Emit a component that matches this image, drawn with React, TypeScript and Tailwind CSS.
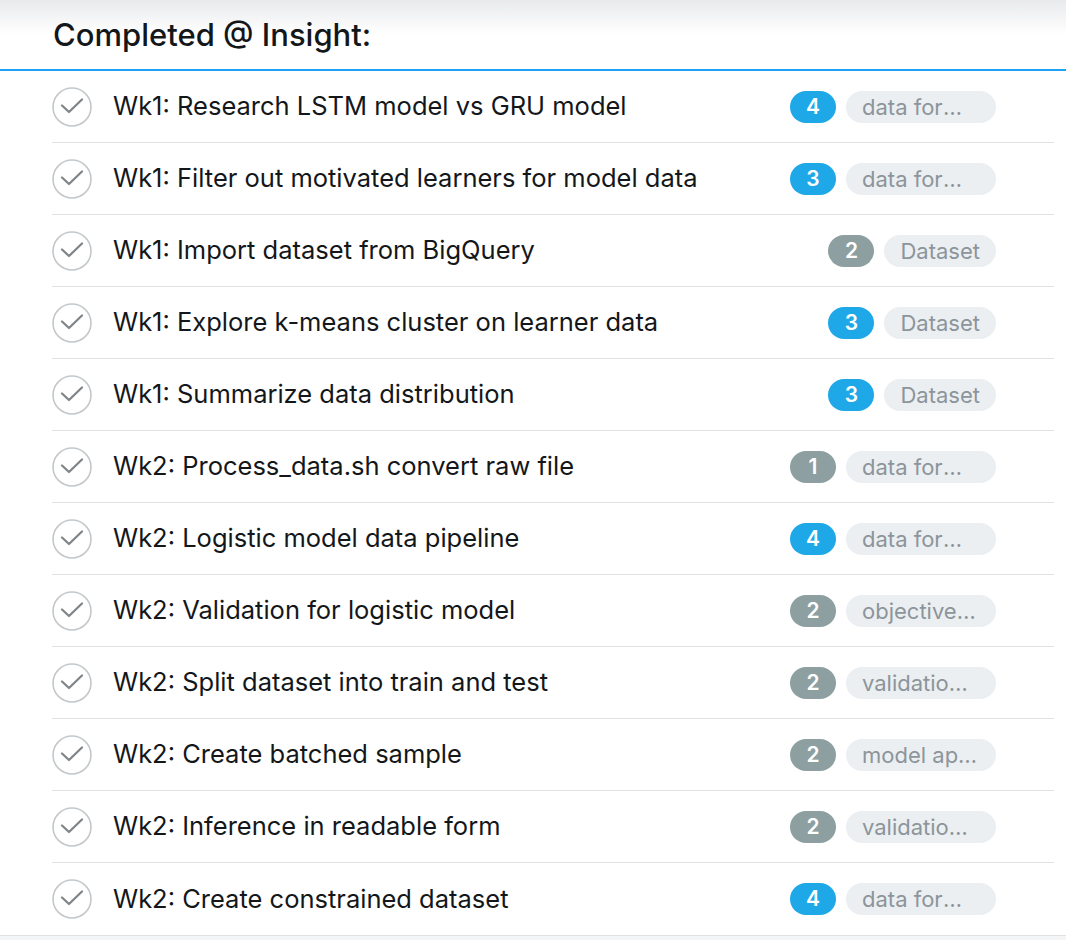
import React from 'react';

type Task = { title: string; count: number; tag: string; hot: boolean };

const tasks: Task[] = [
  { title: 'Wk1: Research LSTM model vs GRU model', count: 4, tag: 'data formatting', hot: true },
  { title: 'Wk1: Filter out motivated learners for model data', count: 3, tag: 'data formatting', hot: true },
  { title: 'Wk1: Import dataset from BigQuery', count: 2, tag: 'Dataset', hot: false },
  { title: 'Wk1: Explore k-means cluster on learner data', count: 3, tag: 'Dataset', hot: true },
  { title: 'Wk1: Summarize data distribution', count: 3, tag: 'Dataset', hot: true },
  { title: 'Wk2: Process_data.sh convert raw file', count: 1, tag: 'data formatting', hot: false },
  { title: 'Wk2: Logistic model data pipeline', count: 4, tag: 'data formatting', hot: true },
  { title: 'Wk2: Validation for logistic model', count: 2, tag: 'objective function', hot: false },
  { title: 'Wk2: Split dataset into train and test', count: 2, tag: 'validation set', hot: false },
  { title: 'Wk2: Create batched sample', count: 2, tag: 'model application', hot: false },
  { title: 'Wk2: Inference in readable form', count: 2, tag: 'validation set', hot: false },
  { title: 'Wk2: Create constrained dataset', count: 4, tag: 'data formatting', hot: true },
];

const CheckCircle = () => (
  <svg width="40" height="40" viewBox="0 0 40 40" className="shrink-0">
    <circle cx="20" cy="20" r="19" fill="none" stroke="#c3c8cc" strokeWidth="1.6" />
    <path d="M10 18.5 L17 25 L30 12.5" fill="none" stroke="#7e8388" strokeWidth="2.2" strokeLinecap="round" strokeLinejoin="round" />
  </svg>
);

const TaskRow: React.FC<{ task: Task; last: boolean }> = ({ task, last }) => (
  <li className={'flex items-center h-[72px] pr-[58px] ' + (last ? '' : 'border-b border-[#dfe3e6]')}>
    <CheckCircle />
    <span className="ml-[21px] flex-1 text-[25.5px] text-[#14171a] truncate">{task.title}</span>
    <span
      className={
        'ml-4 h-[32px] min-w-[46px] px-4 rounded-full flex items-center justify-center text-white text-[21px] font-semibold ' +
        (task.hot ? 'bg-[#1fa8e8]' : 'bg-[#8d9fa0]')
      }
    >
      {task.count}
    </span>
    <span className="ml-[10px] h-[32px] max-w-[150px] px-4 rounded-full bg-[#eceff1] text-[#8b959b] text-[22px] leading-[32px] truncate">
      {task.tag}
    </span>
  </li>
);

export default function App() {
  return (
    <div className="w-[1066px] h-[940px] bg-[#f4f5f6] font-['Inter','Liberation_Sans',sans-serif] overflow-hidden">
      <div className="bg-white border-b border-[#dfe3e6]">
        <div className="h-[69px] bg-gradient-to-b from-[#e9eaec] via-white to-white to-[20%] flex items-center pl-[53px] pt-[1px]">
          <h2 className="text-[31px] font-medium text-[#14171a]">Completed @ Insight:</h2>
        </div>
        <div className="h-[2px] bg-[#1da1f2]" />
        <ul className="pl-[52px] pr-[12px]">
          {tasks.map((t, i) => (
            <TaskRow key={t.title} task={t} last={i === tasks.length - 1} />
          ))}
        </ul>
      </div>
    </div>
  );
}
